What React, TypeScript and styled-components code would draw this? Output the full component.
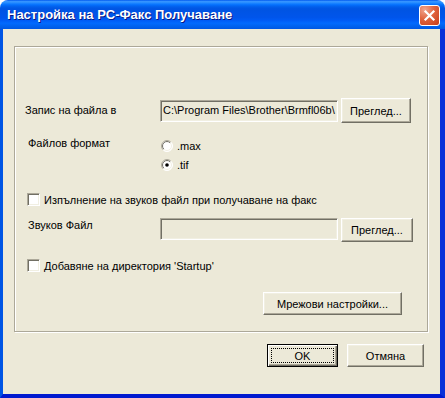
import React from 'react'
import styled, { createGlobalStyle } from 'styled-components'

const GlobalStyle = createGlobalStyle`
  html, body {
    margin: 0;
    padding: 0;
    background: #ffffff;
  }
  body {
    width: 445px;
    height: 398px;
    overflow: hidden;
  }
  * {
    box-sizing: border-box;
  }
`

const Window = styled.div`
  width: 445px;
  height: 398px;
  display: flex;
  flex-direction: column;
  border-radius: 8px 8px 0 0;
  overflow: hidden;
  font-family: "Liberation Sans", Arial, sans-serif;
  font-size: 11px;
  color: #000;
`

const TitleBar = styled.div`
  height: 29px;
  flex: none;
  display: flex;
  align-items: center;
  padding: 0 5px 0 7px;
  background: linear-gradient(
    to bottom,
    #0058ee 0%,
    #3593ff 5%,
    #288eff 9%,
    #127dff 13%,
    #036ffc 17%,
    #0262ee 22%,
    #0057e5 28%,
    #0054e3 34%,
    #0055eb 60%,
    #005bf5 70%,
    #026afe 80%,
    #0062ef 90%,
    #0057e3 100%
  );
`

const Title = styled.div`
  flex: 1;
  color: #fff;
  font-family: "Liberation Sans", Arial, sans-serif;
  font-weight: bold;
  font-size: 13px;
  text-shadow: 1px 1px 0 #0a1883;
  white-space: nowrap;
`

const CloseButton = styled.div`
  width: 21px;
  height: 21px;
  margin-top: 2px;
  border: 1px solid #fff;
  border-radius: 3px;
  background: radial-gradient(circle at 25% 20%, #f0a58e 0%, #e0643e 45%, #c83c18 100%);
  display: flex;
  align-items: center;
  justify-content: center;
`

const Frame = styled.div`
  flex: 1;
  display: flex;
  border-left: 3px solid #0055e5;
  border-right: 5px solid #0831d9;
  border-bottom: 4px solid #0019cf;
`

const Client = styled.div`
  flex: 1;
  display: flex;
  flex-direction: column;
  background: #ece9d8;
  padding: 17px 12px 0 11px;
`

const GroupBox = styled.div`
  height: 286px;
  display: flex;
  flex-direction: column;
  border: 1px solid #aca899;
  box-shadow: inset 1px 1px 0 #fff, 1px 1px 0 #fff;
`

const Row = styled.div<{ $top: number; $h: number; $align?: string }>`
  display: flex;
  align-items: ${p => p.$align ?? 'center'};
  margin-top: ${p => p.$top}px;
  height: ${p => p.$h}px;
`

const Label = styled.div<{ $indent: number; $width: number; $shift?: number }>`
  width: ${p => p.$width}px;
  padding-left: ${p => p.$indent}px;
  margin-top: ${p => p.$shift ?? 0}px;
  line-height: 13px;
  white-space: nowrap;
  flex: none;
`

const PathField = styled.div`
  width: 178px;
  height: 22px;
  flex: none;
  background: #ece9d8;
  border: 1px solid;
  border-color: #aca899 #fff #fff #aca899;
  box-shadow: inset 1px 1px 0 #716f64, inset -1px -1px 0 #f1efe2;
  padding: 3px 2px 0 2px;
  line-height: 13px;
  white-space: nowrap;
  overflow: hidden;
`

const Button = styled.div<{ $w: number; $h: number; $left?: number }>`
  width: ${p => p.$w}px;
  height: ${p => p.$h}px;
  margin-left: ${p => p.$left ?? 0}px;
  flex: none;
  display: flex;
  align-items: center;
  justify-content: center;
  background: #ece9d8;
  border: 1px solid;
  border-color: #fff #716f64 #716f64 #fff;
  box-shadow: inset -1px -1px 0 #aca899, inset 1px 1px 0 #f1efe2;
  white-space: nowrap;
`

const DefaultButton = styled.div<{ $w: number }>`
  width: ${p => p.$w}px;
  height: 23px;
  flex: none;
  display: flex;
  padding: 3px;
  background: #ece9d8;
  border: 1px solid #000;
  box-shadow: inset 1px 1px 0 #fff, inset -1px -1px 0 #716f64, inset -2px -2px 0 #aca899;
`

const FocusRing = styled.div`
  flex: 1;
  display: flex;
  align-items: center;
  justify-content: center;
  border: 1px dotted #000;
`

const RadioList = styled.div`
  display: flex;
  flex-direction: column;
  gap: 7px;
  padding-top: 3px;
`

const Option = styled.div<{ $indent?: number }>`
  display: flex;
  align-items: center;
  gap: 4px;
  height: 12px;
  padding-left: ${p => p.$indent ?? 0}px;
  line-height: 12px;
  white-space: nowrap;
`

const CheckRow = styled.div<{ $top: number }>`
  display: flex;
  align-items: center;
  gap: 4px;
  height: 13px;
  margin-top: ${p => p.$top}px;
  padding-left: 12px;
  white-space: nowrap;
`

const CheckBox = styled.div`
  width: 13px;
  height: 13px;
  flex: none;
  background: #fff;
  border: 1px solid;
  border-color: #aca899 #fff #fff #aca899;
  box-shadow: inset 1px 1px 0 #716f64, inset -1px -1px 0 #f1efe2;
`

const RightBar = styled.div<{ $top: number; $right: number; $gap?: number }>`
  display: flex;
  justify-content: flex-end;
  gap: ${p => p.$gap ?? 0}px;
  margin-top: ${p => p.$top}px;
  padding-right: ${p => p.$right}px;
`

function Radio({ checked }: { checked?: boolean }) {
  return (
    <svg width="12" height="12" viewBox="0 0 12 12" style={{ flex: 'none' }}>
      <defs>
        <linearGradient id="rOuter" x1="0" y1="0" x2="1" y2="1">
          <stop offset="0.45" stopColor="#aca899" />
          <stop offset="0.55" stopColor="#ffffff" />
        </linearGradient>
        <linearGradient id="rInner" x1="0" y1="0" x2="1" y2="1">
          <stop offset="0.45" stopColor="#716f64" />
          <stop offset="0.55" stopColor="#f1efe2" />
        </linearGradient>
      </defs>
      <circle cx="6" cy="6" r="5.5" fill="#fff" stroke="url(#rOuter)" strokeWidth="1" />
      <circle cx="6" cy="6" r="4.5" fill="#fff" stroke="url(#rInner)" strokeWidth="1" />
      {checked && <circle cx="6" cy="6" r="1.8" fill="#000" />}
    </svg>
  )
}

export default function App() {
  return (
    <>
      <GlobalStyle />
      <Window>
        <TitleBar>
          <Title>Настройка на PC-Факс Получаване</Title>
          <CloseButton>
            <svg width="13" height="13" viewBox="0 0 13 13">
              <path d="M2.5 2.5 L10.5 10.5 M10.5 2.5 L2.5 10.5" stroke="#fff" strokeWidth="2.2" strokeLinecap="square" />
            </svg>
          </CloseButton>
        </TitleBar>
        <Frame>
          <Client>
            <GroupBox>
              <Row $top={51} $h={25}>
                <Label $indent={10} $width={145}>Запис на файла в</Label>
                <PathField>C:\Program Files\Brother\Brmfl06b\</PathField>
                <Button $w={70} $h={25} $left={3}>Преглед...</Button>
              </Row>
              <Row $top={14} $h={34} $align="flex-start">
                <Label $indent={13} $width={146}>Файлов формат</Label>
                <RadioList>
                  <Option><Radio />.max</Option>
                  <Option><Radio checked />.tif</Option>
                </RadioList>
              </Row>
              <CheckRow $top={22}>
                <CheckBox />
                Изпълнение на звуков файл при получаване на факс
              </CheckRow>
              <Row $top={12} $h={24} $align="flex-start">
                <Label $indent={13} $width={145} $shift={1}>Звуков Файл</Label>
                <PathField />
                <Button $w={72} $h={24} $left={3}>Преглед...</Button>
              </Row>
              <CheckRow $top={17}>
                <CheckBox />
                Добавяне на директория 'Startup'
              </CheckRow>
              <RightBar $top={20} $right={25}>
                <Button $w={139} $h={23}>Мрежови настройки...</Button>
              </RightBar>
            </GroupBox>
            <RightBar $top={12} $right={4} $gap={9}>
              <DefaultButton $w={71}>
                <FocusRing>OK</FocusRing>
              </DefaultButton>
              <Button $w={77} $h={23}>Отмяна</Button>
            </RightBar>
          </Client>
        </Frame>
      </Window>
    </>
  )
}
